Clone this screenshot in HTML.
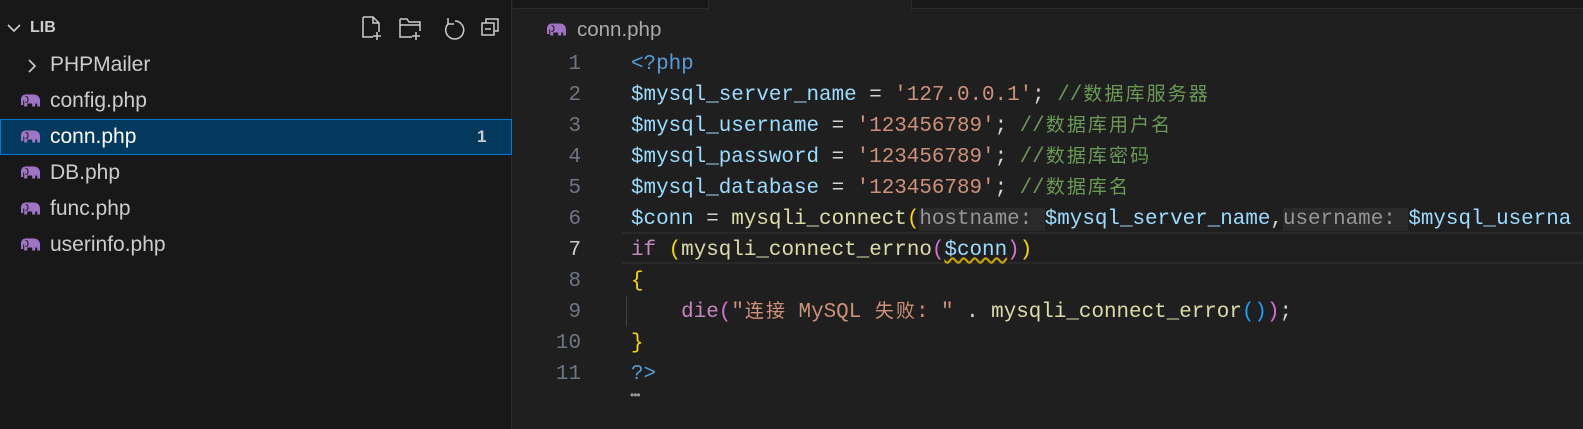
<!DOCTYPE html>
<html><head><meta charset="utf-8"><style>
*{margin:0;padding:0;box-sizing:border-box}
body{width:1583px;height:429px;overflow:hidden;background:#1f1f1f;font-family:"Liberation Sans",sans-serif;position:relative}
#side{position:absolute;left:0;top:0;width:512px;height:429px;background:#181818;border-right:1px solid #2b2b2b}
.row{position:absolute;left:0;width:512px;height:36px;color:#cccccc;font-size:21px;line-height:36px}
.row .t{position:absolute;left:50px}
.eleph{position:absolute;left:20px;top:10px;width:21px;height:16px}
#sel{background:#04395e;border:1px solid #0078d4}
#top{position:absolute;left:513px;top:0;width:1070px;height:9px;background:#181818;border-bottom:1px solid #2b2b2b}
#tab{position:absolute;left:708px;top:0;width:204px;height:10px;background:#1f1f1f;border-left:1px solid #2b2b2b;border-right:1px solid #2b2b2b}
.code{position:absolute;left:0;font-family:"Liberation Mono","Noto Sans CJK SC",monospace;font-size:20.9px;white-space:pre;height:31px;line-height:31px}
.ln{position:absolute;width:581px;text-align:right;color:#6e7681}
.tx{position:absolute;left:631px;color:#d4d4d4}
.c{display:inline-block;width:2ch;text-align:center;font-family:"Noto Sans CJK SC",sans-serif;font-size:19px;line-height:20px;vertical-align:baseline}
.v{color:#9cdcfe}.s{color:#ce9178}.m{color:#6a9955}.k{color:#c586c0}.f{color:#dcdcaa}.y{color:#ffd700}.p{color:#da70d6}.b{color:#179fff}.tag{color:#569cd6}
.h{color:#969696;background:#2a2a2a}
</style></head><body>
<svg width="0" height="0" style="position:absolute"><defs><symbol id="el" viewBox="0 0 21 16"><path d="M6 1.5c-3 0-5 2-5 5v5.5h2.2v-4.5h1v6h3v-3h5v3h3v-3h2v3h2.8v-6c0-3.5-2.5-6-6-6h-6c-.5 0-1-.2-2 0z" fill="#a074c4"/><path d="M5.5 3.5c1.5 0 2.5 1 2.5 3s-1 3-2.5 3" stroke="#181818" stroke-width="1" fill="none"/></symbol></defs></svg>
<div id="side">
 <div class="row" style="top:10px"><svg style="position:absolute;left:6px;top:11px" width="16" height="14"><path d="M2 4l6 6 6-6" stroke="#ccc" stroke-width="1.6" fill="none"/></svg><span style="position:absolute;left:30px;font-weight:bold;font-size:16px">LIB</span>
 <svg style="position:absolute;left:360px;top:5px" width="140" height="26" fill="none" stroke="#ccc" stroke-width="1.5">
  <path d="M3 2h10l6 6v9M3 2v20h10M13 2v6h6M17 17v8M13 21h8"/>
  <path d="M40 4h7l2 3h11v9M40 4v18h12M40 10h20M56 17v8M52 21h8"/>
  <path d="M95 6a9 9 0 1 1-7 3M88 3v6h6"/>
  <path d="M122 8h12v12h-12zM126 8v-4h12v12h-4M125 14h6"/>
 </svg></div>
 <div class="row" style="top:47px"><svg style="position:absolute;left:26px;top:11px" width="12" height="16"><path d="M3 2l6 6-6 6" stroke="#ccc" stroke-width="1.6" fill="none"/></svg><span class="t">PHPMailer</span></div>
 <div class="row" style="top:83px"><svg class="eleph"><use href="#el"/></svg><span class="t">config.php</span></div>
 <div class="row" id="sel" style="top:119px;color:#fff"><svg class="eleph" style="top:9px;left:19px"><use href="#el"/></svg><span class="t" style="left:49px;line-height:34px">conn.php</span><span style="position:absolute;left:476px;line-height:34px;font-weight:bold;font-size:17px;color:#ccc">1</span></div>
 <div class="row" style="top:155px"><svg class="eleph"><use href="#el"/></svg><span class="t">DB.php</span></div>
 <div class="row" style="top:191px"><svg class="eleph"><use href="#el"/></svg><span class="t">func.php</span></div>
 <div class="row" style="top:227px"><svg class="eleph"><use href="#el"/></svg><span class="t">userinfo.php</span></div>
</div>
<div id="top"></div><div id="tab"></div>
<div style="position:absolute;left:546px;top:20px;height:20px;font-size:20.5px;color:#a9a9a9;line-height:20px"><svg style="position:absolute;left:0;top:2px" width="21" height="16"><use href="#el"/></svg><span style="position:absolute;left:31px;white-space:nowrap">conn.php</span></div>
<div style="position:absolute;left:622px;top:232px;width:961px;height:32px;border-top:2px solid #282828;border-bottom:2px solid #282828"></div>
<div style="position:absolute;left:626px;top:296px;width:1px;height:31px;background:#404040"></div>
<div class="code" style="top:49px"><span class="ln">1</span><span class="tx"><span class="tag">&lt;?php</span></span></div>
<div class="code" style="top:80px"><span class="ln">2</span><span class="tx"><span class="v">$mysql_server_name</span> = <span class="s">'127.0.0.1'</span>; <span class="m">//<span class="c">数</span><span class="c">据</span><span class="c">库</span><span class="c">服</span><span class="c">务</span><span class="c">器</span></span></span></div>
<div class="code" style="top:111px"><span class="ln">3</span><span class="tx"><span class="v">$mysql_username</span> = <span class="s">'123456789'</span>; <span class="m">//<span class="c">数</span><span class="c">据</span><span class="c">库</span><span class="c">用</span><span class="c">户</span><span class="c">名</span></span></span></div>
<div class="code" style="top:142px"><span class="ln">4</span><span class="tx"><span class="v">$mysql_password</span> = <span class="s">'123456789'</span>; <span class="m">//<span class="c">数</span><span class="c">据</span><span class="c">库</span><span class="c">密</span><span class="c">码</span></span></span></div>
<div class="code" style="top:173px"><span class="ln">5</span><span class="tx"><span class="v">$mysql_database</span> = <span class="s">'123456789'</span>; <span class="m">//<span class="c">数</span><span class="c">据</span><span class="c">库</span><span class="c">名</span></span></span></div>
<div class="code" style="top:204px"><span class="ln">6</span><span class="tx"><span class="v">$conn</span> = <span class="f">mysqli_connect</span><span class="y">(</span><span class="h">hostname: </span><span class="v">$mysql_server_name</span>,<span class="h">username: </span><span class="v">$mysql_userna</span></span></div>
<div class="code" style="top:235px"><span class="ln" style="color:#ccc">7</span><span class="tx"><span class="k">if</span> <span class="y">(</span><span class="f">mysqli_connect_errno</span><span class="p">(</span><span class="v" style="text-decoration:underline wavy #cca700">$conn</span><span class="p">)</span><span class="y">)</span></span></div>
<div class="code" style="top:266px"><span class="ln">8</span><span class="tx"><span class="y">{</span></span></div>
<div class="code" style="top:297px"><span class="ln">9</span><span class="tx">    <span class="k">die</span><span class="p">(</span><span class="s">"<span class="c">连</span><span class="c">接</span> MySQL <span class="c">失</span><span class="c">败</span>: "</span> . <span class="f">mysqli_connect_error</span><span class="b">()</span><span class="p">)</span>;</span></div>
<div class="code" style="top:328px"><span class="ln">10</span><span class="tx"><span class="y">}</span></span></div>
<div class="code" style="top:359px"><span class="ln">11</span><span class="tx"><span class="tag">?&gt;</span></span></div>
<div style="position:absolute;left:630px;top:388px;color:#999;font-size:12px;letter-spacing:-1px">•••</div>
</body></html>
